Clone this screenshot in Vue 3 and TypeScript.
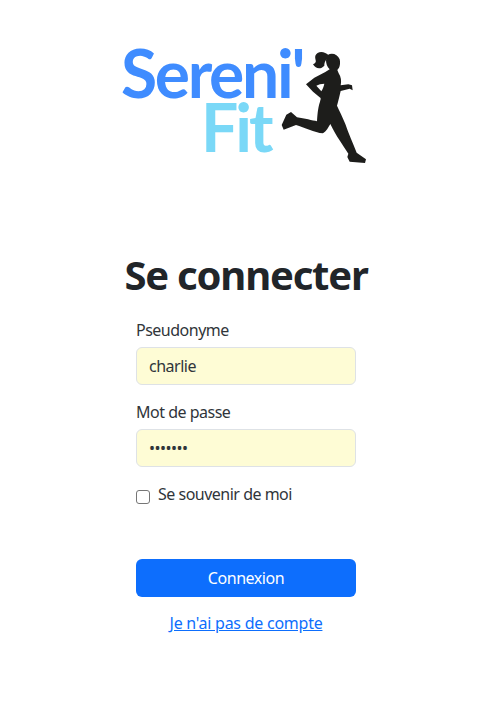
<script setup lang="ts">
import { ref } from 'vue';

const pseudo = ref('charlie');
const password = ref('charlie');
const remember = ref(false);
</script>

<template>
  <main class="page">
    <div class="logo">
      <div class="logo-name">Sereni'</div>
      <div class="logo-sub">Fit</div>
      <svg class="runner" viewBox="0 0 315 390" aria-hidden="true">
        <path
          fill="#1d1d1b"
          fill-rule="evenodd"
          d="M170 45C182 37 200 42 206 58C209 72 206 84 199 90L203 100C210 110 212 125 209 136L232 133L243 136L245 151L236 146L209 153C206 165 203 180 198 197C204 210 214 230 223 252C232 280 246 310 257 338L285 358L282 369L236 365L229 351L232 341C216 315 196 290 178 252C172 262 166 274 156 280C130 278 100 262 75 255L38 269L32 255L46 224L60 216L78 232C100 236 125 241 138 244C139 230 140 205 147 185C149 178 151 174 145 171L126 155L105 133L130 113L163 96L176 88C168 80 165 70 165 60ZM136 137L151 154C155 148 158 140 160 131C150 131 143 133 136 137Z"
        />
        <path
          fill="#1d1d1b"
          d="M174 47C160 31 138 33 133 47C130 60 142 65 126 73C135 88 150 88 160 77C160 66 165 56 172 56Z"
        />
      </svg>
    </div>

    <h1 class="title">Se connecter</h1>

    <form class="form" @submit.prevent>
      <label class="field-label" for="pseudo">Pseudonyme</label>
      <input id="pseudo" v-model="pseudo" class="field" type="text" />

      <label class="field-label" for="password">Mot de passe</label>
      <input id="password" v-model="password" class="field" type="password" />

      <label class="remember">
        <input v-model="remember" class="check" type="checkbox" />
        <span>Se souvenir de moi</span>
      </label>

      <button class="submit" type="submit">Connexion</button>
      <a class="signup" href="#">Je n'ai pas de compte</a>
    </form>
  </main>
</template>

<style>
body { background: #fff; }
</style>

<style scoped>
.page {
  height: 705px;
  overflow: hidden;
  box-sizing: border-box;
  padding: 40px 0 0 12px;
  display: flex;
  flex-direction: column;
  align-items: center;
  font-family: "Noto Sans", sans-serif;
  color: #212529;
}

.logo {
  position: relative;
  width: 246px;
  height: 130px;
  padding-top: 6px;
  box-sizing: border-box;
  font-family: Lato, sans-serif;
  font-weight: 700;
  font-size: 66px;
  line-height: 54px;
}
.logo-name { color: #3f8cff; margin-left: -2px; letter-spacing: -2.3px; }
.logo-sub { color: #7ad8f7; padding-left: 78px; letter-spacing: -3px; }
.runner {
  position: absolute;
  left: 148px;
  top: 0;
  width: 105px;
  height: 130px;
}

.title {
  margin: 81px 0 0;
  font-size: 40px;
  line-height: 48px;
  font-weight: 700;
  letter-spacing: -1.2px;
}

.form {
  width: 220px;
  margin-top: 19px;
  display: flex;
  flex-direction: column;
  color: #30353a;
}

.field-label {
  font-size: 16px;
  line-height: 24px;
  margin-bottom: 5px;
  letter-spacing: -0.5px;
}

.field {
  box-sizing: border-box;
  height: 38px;
  padding: 6px 12px;
  margin-bottom: 15px;
  border: 1px solid #dee2e6;
  border-radius: 6px;
  background: #fefcd5;
  color: #30353a;
  font-family: inherit;
  font-size: 16px;
  letter-spacing: -0.5px;
  outline: none;
}

.remember {
  display: flex;
  align-items: center;
  gap: 8px;
  height: 24px;
  font-size: 16px;
  letter-spacing: -0.5px;
}
.check {
  appearance: none;
  box-sizing: border-box;
  width: 14px;
  height: 14px;
  margin: 6px 0 0;
  border: 1px solid #767676;
  border-radius: 3px;
  background: #fff;
}

.submit {
  height: 38px;
  margin-top: 53px;
  border: 0;
  border-radius: 6px;
  background: #0d6efd;
  color: #fff;
  font-family: inherit;
  font-size: 16px;
  letter-spacing: -0.45px;
}

.signup {
  margin-top: 14px;
  line-height: 24px;
  font-size: 16px;
  letter-spacing: -0.25px;
  text-align: center;
  color: #0d6efd;
}
</style>
